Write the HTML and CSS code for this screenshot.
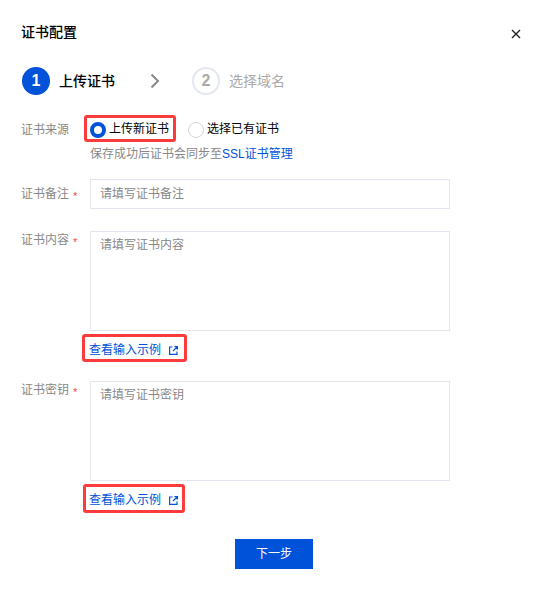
FILE: index.html
```html
<!DOCTYPE html>
<html lang="zh-CN">
<head>
  <meta charset="UTF-8">
  <meta name="viewport" content="width=device-width, initial-scale=1.0">
  <title>证书配置</title>
  <link rel="stylesheet" href="styles.css">
</head>
<body>
<div class="dialog">
  <div class="dialog-header">
    <h3 class="title">证书配置</h3>
    <button class="close" type="button" aria-label="关闭">
      <svg width="10" height="10" viewBox="0 0 10 10"><path d="M1 1L9 9M9 1L1 9" fill="none" stroke="#222" stroke-width="1.4"/></svg>
    </button>
  </div>

  <div class="steps">
    <div class="step active">
      <span class="step-num">1</span>
      <span class="step-name">上传证书</span>
    </div>
    <svg class="step-arrow" width="10" height="16" viewBox="0 0 10 16"><path d="M1.5 1.5L8 8L1.5 14.5" fill="none" stroke="#888" stroke-width="2"/></svg>
    <div class="step">
      <span class="step-num">2</span>
      <span class="step-name">选择域名</span>
    </div>
  </div>

  <form class="form">
    <div class="row row-source">
      <div class="label">证书来源</div>
      <div class="control">
        <div class="radios">
          <label class="radio marked mark-radio"><input type="radio" name="source" checked>上传新证书</label>
          <label class="radio"><input type="radio" name="source">选择已有证书</label>
        </div>
        <div class="hint">保存成功后证书会同步至<a class="link">SSL证书管理</a></div>
      </div>
    </div>

    <div class="row row-remark">
      <div class="label">证书备注<span class="required">*</span></div>
      <div class="control">
        <input class="input" type="text" placeholder="请填写证书备注">
      </div>
    </div>

    <div class="row row-text">
      <div class="label">证书内容<span class="required">*</span></div>
      <div class="control">
        <textarea class="input textarea" placeholder="请填写证书内容"></textarea>
        <a class="link example marked mark-content">查看输入示例
          <svg class="icon" width="9" height="9" viewBox="0 0 9 9"><path d="M3.5 1H.6V8.4H8V5.5M5.5 .6H8.4V3.5M8.4 .6L4 5" fill="none" stroke="#0052d9" stroke-width="1.2"/></svg>
        </a>
      </div>
    </div>

    <div class="row row-text">
      <div class="label">证书密钥<span class="required">*</span></div>
      <div class="control">
        <textarea class="input textarea" placeholder="请填写证书密钥"></textarea>
        <a class="link example marked mark-key">查看输入示例
          <svg class="icon" width="9" height="9" viewBox="0 0 9 9"><path d="M3.5 1H.6V8.4H8V5.5M5.5 .6H8.4V3.5M8.4 .6L4 5" fill="none" stroke="#0052d9" stroke-width="1.2"/></svg>
        </a>
      </div>
    </div>

    <div class="footer">
      <button class="btn" type="button">下一步</button>
    </div>
  </form>
</div>
</body>
</html>
```

FILE: styles.css
```css
* {
  box-sizing: border-box;
}

body {
  margin: 0;
  background: #fff;
  color: #000;
  font-family: "Liberation Sans", "Noto Sans CJK SC", sans-serif;
  font-size: 12px;
  line-height: 20px;
}

.dialog {
  height: 591px;
  padding: 22px 20px 0 21px;
}

.dialog-header {
  display: flex;
  justify-content: space-between;
  height: 20px;
}

.title {
  margin: 0;
  font-size: 14px;
  font-weight: 500;
}

.close {
  display: flex;
  margin: 7px 1px 0 0;
  padding: 0;
  height: 10px;
  border: none;
  background: none;
  cursor: pointer;
}

/* steps */
.steps {
  display: flex;
  align-items: center;
  height: 28px;
  margin: 25px 0 0 1px;
}

.step {
  display: flex;
  align-items: center;
  gap: 9px;
  color: #aaa;
  font-size: 14px;
}

.step-num {
  width: 28px;
  height: 28px;
  border: 2px solid #e5e8f0;
  border-radius: 50%;
  font-size: 16px;
  font-weight: bold;
  line-height: 23px;
  text-align: center;
}

.step.active {
  color: #000;
  font-weight: 500;
}

.step.active .step-num {
  border-color: #0052d9;
  background: #0052d9;
  color: #fff;
}

.step-arrow {
  margin: 0 32px 0 35px;
}

/* form */
.row {
  display: flex;
}

.label {
  width: 69px;
  color: #888;
}

.required {
  margin-left: 4px;
  color: #f04848;
  font-size: 11px;
  vertical-align: -2px;
  line-height: 1;
}

.control {
  width: 360px;
}

.row-source {
  margin-top: 24px;
}

.row-source .label {
  padding-top: 1px;
}

.radios {
  display: flex;
  gap: 19px;
  height: 20px;
}

.radio {
  display: flex;
  gap: 3px;
}

.radio input {
  appearance: none;
  width: 16px;
  height: 16px;
  margin: 3px 0 0;
  border: 1px solid #cfd5de;
  border-radius: 50%;
}

.radio input:checked {
  border: 4px solid #0052d9;
}

.hint {
  margin: 5px 0 0;
  color: #888;
}

.link {
  color: #0052d9;
  cursor: pointer;
}

.row-remark {
  margin-top: 15px;
}

.row-remark .label {
  padding-top: 5px;
}

.input {
  display: block;
  width: 100%;
  height: 30px;
  padding: 0 9px;
  border: 1px solid #e4e5ef;
  border-radius: 0;
  outline: none;
  font: inherit;
}

.input::placeholder {
  color: #888;
  opacity: 1;
}

.row-text {
  height: 128px;
  margin-top: 22px;
}

.row-text .label {
  margin-top: -1px;
}

.textarea {
  height: 100px;
  padding: 3px 9px;
  resize: none;
}

.example {
  display: inline-flex;
  align-items: center;
  gap: 8px;
  margin: 9px 0 0 -1px;
}

.icon {
  margin-top: 1px;
}

/* red frames around the highlighted items */
.marked {
  position: relative;
}

.marked::after {
  content: "";
  position: absolute;
  border: 3px solid #fc3c3c;
  border-radius: 3px;
}

.mark-radio::after {
  inset: -4px -7px -3px -6px;
}

.mark-content::after {
  inset: -6px -9px -2px -7px;
}

.mark-key::after {
  inset: -6px -7px -3px -6px;
}

.footer {
  margin: 30px 0 0 214px;
}

.btn {
  display: block;
  width: 78px;
  height: 30px;
  padding: 0;
  border: none;
  background: #0052d9;
  color: #fff;
  font: inherit;
  cursor: pointer;
}
```
